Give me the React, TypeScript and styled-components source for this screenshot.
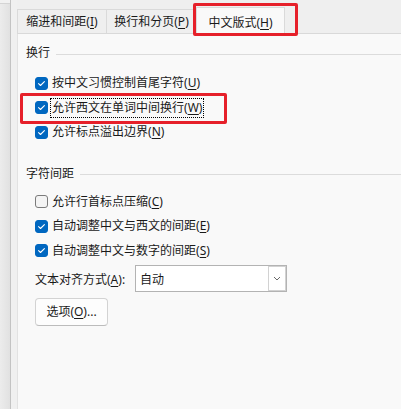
import React from "react";
import styled, { createGlobalStyle } from "styled-components";

const Global = createGlobalStyle`
  html, body { margin: 0; padding: 0; }
  body {
    background: #efefef;
    font-family: "Noto Sans", "Noto Sans CJK SC", sans-serif;
    font-size: 12px;
    color: #1a1a1a;
  }
`;

const Root = styled.div`
  position: relative;
  display: flex;
  width: 401px;
  height: 409px;
  overflow: hidden;
  background: #efefef;
`;

const LeftEdge = styled.div`
  width: 10px;
  flex: none;
  background:
    linear-gradient(#f1f1f1 0 3px, #d4d4d4 3px 4px, transparent 4px),
    linear-gradient(to right, #ececec, #e1e1e1);
  border-right: 1px solid #c3c3c3;
`;

const Gutter = styled.div`
  width: 6px;
  flex: none;
  background: #f0f0f0;
`;

const Main = styled.div`
  flex: 1;
  display: flex;
  flex-direction: column;
  min-width: 0;
`;

const TabStrip = styled.div`
  height: 34px;
  flex: none;
  display: flex;
  align-items: flex-end;
  background: linear-gradient(to top, #d9d9d9 0 1px, transparent 1px);
`;

const Tab = styled.div<{ $active?: boolean; $w: number }>`
  box-sizing: border-box;
  width: ${(p) => p.$w}px;
  height: ${(p) => (p.$active ? 27 : 24)}px;
  margin-bottom: ${(p) => (p.$active ? 0 : 1)}px;
  margin-left: -1px;
  padding-top: ${(p) => (p.$active ? 3 : 1)}px;
  &:first-child { margin-left: 0; }
  display: flex;
  align-items: center;
  justify-content: center;
  border: 1px solid #dadada;
  border-bottom: none;
  background: ${(p) => (p.$active ? "#f9f9f9" : "#efefef")};
  line-height: 16px;
  white-space: nowrap;
`;

const Panel = styled.div`
  flex: 1;
  background: #f9f9f9;
  border-left: 1px solid #e2e2e2;
  display: flex;
  flex-direction: column;
  padding-left: 8px;
`;

const GroupHeader = styled.div<{ $top: number }>`
  display: flex;
  align-items: center;
  gap: 6px;
  height: 16px;
  line-height: 16px;
  margin-top: ${(p) => p.$top}px;
  white-space: nowrap;
  &::after {
    content: "";
    flex: 1;
    height: 1px;
    background: #dcdcdc;
    margin-top: 2px;
  }
`;

const CheckList = styled.div<{ $top: number }>`
  display: flex;
  flex-direction: column;
  margin-top: ${(p) => p.$top}px;
  padding-left: 9px;
`;

const Row = styled.label`
  display: flex;
  align-items: center;
  gap: 2px;
  height: 24.5px;
  white-space: nowrap;
`;

const Box = styled.span<{ $checked?: boolean }>`
  box-sizing: border-box;
  width: 13px;
  height: 13px;
  border-radius: 3px;
  flex: none;
  display: flex;
  align-items: center;
  justify-content: center;
  background: ${(p) => (p.$checked ? "#0067c0" : "#f4f4f4")};
  border: 1px solid ${(p) => (p.$checked ? "#0067c0" : "#7b7b7b")};
`;

const Label = styled.span<{ $focus?: boolean }>`
  box-sizing: border-box;
  line-height: 18px;
  padding: 0 1px;
  border: 1px dotted ${(p) => (p.$focus ? "#000" : "transparent")};
`;

const Key = styled.span`
  text-decoration: underline;
  text-underline-offset: 2px;
  text-decoration-thickness: 1px;
`;

const SelectRow = styled.div`
  display: flex;
  align-items: center;
  margin-top: 2px;
  padding-left: 9px;
  height: 27px;
`;

const SelectLabel = styled.span`
  width: 100px;
  flex: none;
  white-space: nowrap;
`;

const Select = styled.div`
  box-sizing: border-box;
  width: 152px;
  height: 27px;
  display: flex;
  align-items: stretch;
  background: #fff;
  border: 1px solid #b3b3b3;
`;

const SelectValue = styled.span`
  flex: 1;
  display: flex;
  align-items: center;
  padding-left: 4px;
`;

const DropButton = styled.span`
  box-sizing: border-box;
  width: 18px;
  display: flex;
  align-items: center;
  justify-content: center;
  border: 1px solid #d2d2d2;
  background: #fff;
`;

const Button = styled.button`
  box-sizing: border-box;
  margin-top: 6px;
  margin-left: 9px;
  width: 73px;
  height: 28px;
  padding: 0;
  border: 1px solid #d3d3d3;
  border-bottom-color: #bcbcbc;
  border-radius: 4px;
  background: #fdfdfd;
  font: inherit;
  color: inherit;
  line-height: 16px;
  align-self: flex-start;
`;

const Highlight = styled.div<{ $x: number; $y: number; $w: number; $h: number }>`
  position: absolute;
  box-sizing: border-box;
  left: ${(p) => p.$x}px;
  top: ${(p) => p.$y}px;
  width: ${(p) => p.$w}px;
  height: ${(p) => p.$h}px;
  border: 3px solid #e6202a;
  border-radius: 2px;
  pointer-events: none;
`;

const Check = () => (
  <svg width="9" height="9" viewBox="0 0 9 9">
    <path d="M1.6 4.7 L3.5 6.5 L7.4 2.6" fill="none" stroke="#fff" strokeWidth="1.1" strokeLinecap="round" strokeLinejoin="round" />
  </svg>
);

const Chevron = () => (
  <svg width="8" height="5" viewBox="0 0 8 5">
    <path d="M1 1 L4 4 L7 1" fill="none" stroke="#6a6a6a" strokeWidth="1" />
  </svg>
);

type Item = { text: string; key: string; checked: boolean; focus?: boolean };

const group1: Item[] = [
  { text: "按中文习惯控制首尾字符", key: "U", checked: true },
  { text: "允许西文在单词中间换行", key: "W", checked: true, focus: true },
  { text: "允许标点溢出边界", key: "N", checked: true },
];

const group2: Item[] = [
  { text: "允许行首标点压缩", key: "C", checked: false },
  { text: "自动调整中文与西文的间距", key: "E", checked: true },
  { text: "自动调整中文与数字的间距", key: "S", checked: true },
];

const CheckRow = ({ item }: { item: Item }) => (
  <Row>
    <Box $checked={item.checked}>{item.checked && <Check />}</Box>
    <Label $focus={item.focus}>
      {item.text}(<Key>{item.key}</Key>)
    </Label>
  </Row>
);

export default function App() {
  return (
    <Root>
      <Global />
      <LeftEdge />
      <Gutter />
      <Main>
        <TabStrip>
          <Tab $w={90}>缩进和间距(<Key>I</Key>)</Tab>
          <Tab $w={91}>换行和分页(<Key>P</Key>)</Tab>
          <Tab $w={89} $active>中文版式(<Key>H</Key>)</Tab>
        </TabStrip>
        <Panel>
          <GroupHeader $top={11}>换行</GroupHeader>
          <CheckList $top={10}>
            {group1.map((it) => (
              <CheckRow key={it.key} item={it} />
            ))}
          </CheckList>
          <GroupHeader $top={21}>字符间距</GroupHeader>
          <CheckList $top={8}>
            {group2.map((it) => (
              <CheckRow key={it.key} item={it} />
            ))}
          </CheckList>
          <SelectRow>
            <SelectLabel>文本对齐方式(<Key>A</Key>):</SelectLabel>
            <Select>
              <SelectValue>自动</SelectValue>
              <DropButton><Chevron /></DropButton>
            </Select>
          </SelectRow>
          <Button>选项(<Key>O</Key>)...</Button>
        </Panel>
      </Main>
      <Highlight $x={193} $y={3} $w={105} $h={33} />
      <Highlight $x={20} $y={93} $w={207} $h={31} />
    </Root>
  );
}
